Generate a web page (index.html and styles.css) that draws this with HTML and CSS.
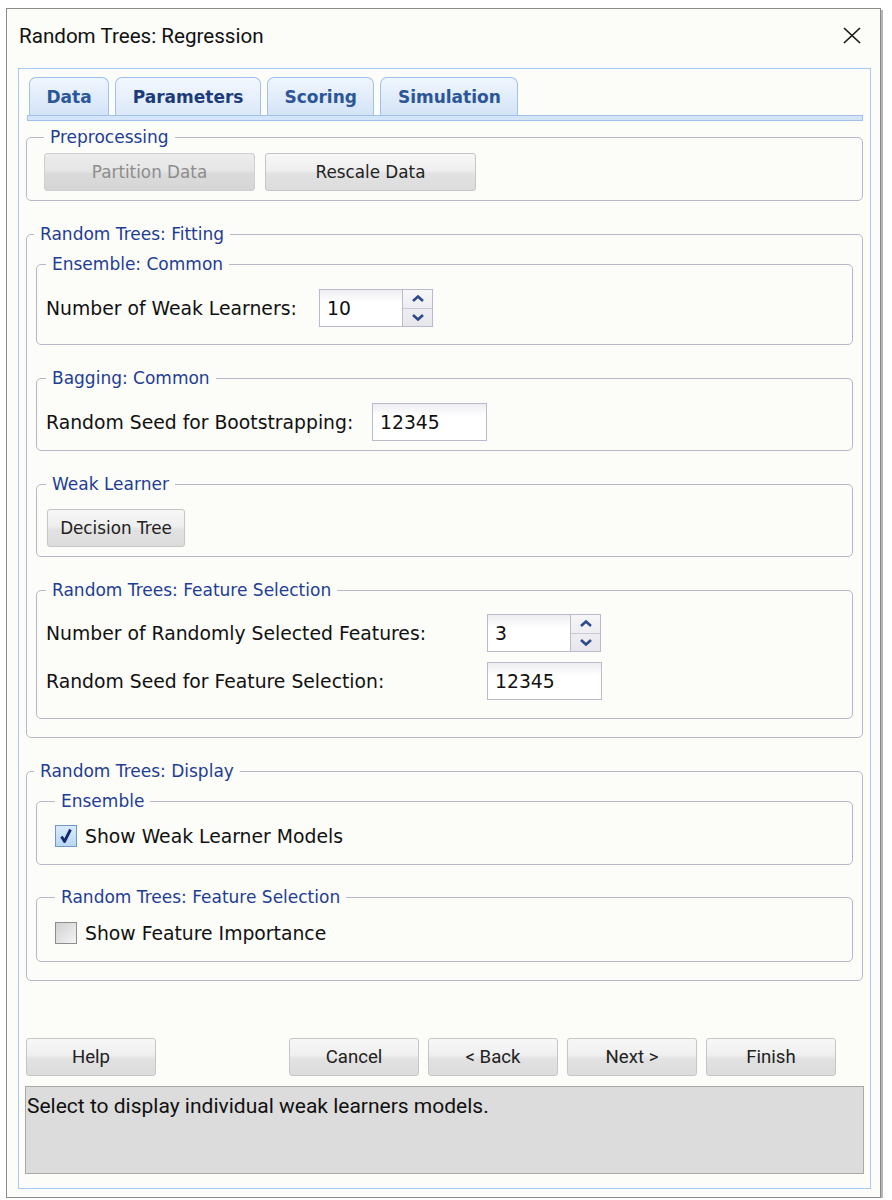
FILE: index.html
```html
<!DOCTYPE html>
<html>
<head>
<meta charset="utf-8">
<link rel="stylesheet" href="styles.css">
</head>
<body>
<div class="window">
  <div class="titlebar">
    <span class="title">Random Trees: Regression</span>
    <svg class="close" width="18" height="17" viewBox="0 0 18 17"><path d="M1 1 L17 16 M17 1 L1 16" stroke="#1a1a1a" stroke-width="1.7" fill="none"/></svg>
  </div>
  <div class="panel">
    <div class="tabs">
      <div class="tab">Data</div>
      <div class="tab active">Parameters</div>
      <div class="tab">Scoring</div>
      <div class="tab">Simulation</div>
    </div>
    <div class="tabbar"></div>

    <fieldset class="grp pre">
      <legend>Preprocessing</legend>
      <div class="btnrow">
        <div class="btn wide disabled">Partition Data</div>
        <div class="btn wide">Rescale Data</div>
      </div>
    </fieldset>

    <fieldset class="grp outer fit">
      <legend>Random Trees: Fitting</legend>
      <fieldset class="grp inner ens">
        <legend>Ensemble: Common</legend>
        <div class="row">
          <span class="lbl lbl-ens">Number of Weak Learners:</span>
          <div class="spin">
            <div class="field">10</div>
            <div class="arrows">
              <div class="arr"><svg width="14" height="9" viewBox="0 0 14 9"><path d="M2 7 L7 2.5 L12 7" stroke="#2d4b8c" stroke-width="2.6" fill="none"/></svg></div>
              <div class="arr"><svg width="14" height="9" viewBox="0 0 14 9"><path d="M2 2 L7 6.5 L12 2" stroke="#2d4b8c" stroke-width="2.6" fill="none"/></svg></div>
            </div>
          </div>
        </div>
      </fieldset>
      <fieldset class="grp inner bag">
        <legend>Bagging: Common</legend>
        <div class="row">
          <span class="lbl lbl-bag">Random Seed for Bootstrapping:</span>
          <div class="field solo">12345</div>
        </div>
      </fieldset>
      <fieldset class="grp inner weak">
        <legend>Weak Learner</legend>
        <div class="btnrow">
          <div class="btn dt">Decision Tree</div>
        </div>
      </fieldset>
      <fieldset class="grp inner fs">
        <legend>Random Trees: Feature Selection</legend>
        <div class="row">
          <span class="lbl lbl-fs">Number of Randomly Selected Features:</span>
          <div class="spin">
            <div class="field">3</div>
            <div class="arrows">
              <div class="arr"><svg width="14" height="9" viewBox="0 0 14 9"><path d="M2 7 L7 2.5 L12 7" stroke="#2d4b8c" stroke-width="2.6" fill="none"/></svg></div>
              <div class="arr"><svg width="14" height="9" viewBox="0 0 14 9"><path d="M2 2 L7 6.5 L12 2" stroke="#2d4b8c" stroke-width="2.6" fill="none"/></svg></div>
            </div>
          </div>
        </div>
        <div class="row row-gap">
          <span class="lbl lbl-fs">Random Seed for Feature Selection:</span>
          <div class="field solo">12345</div>
        </div>
      </fieldset>
    </fieldset>

    <fieldset class="grp outer disp">
      <legend>Random Trees: Display</legend>
      <fieldset class="grp inner2 ens2">
        <legend>Ensemble</legend>
        <div class="chkrow">
          <span class="chk checked"><svg width="22" height="22" viewBox="0 0 22 22"><path d="M6.5 11.5 L9.5 16.5 L15.5 4.5" stroke="#152a70" stroke-width="2.8" fill="none" stroke-linejoin="round"/></svg></span>
          <span class="chklbl">Show Weak Learner Models</span>
        </div>
      </fieldset>
      <fieldset class="grp inner2 fs2">
        <legend>Random Trees: Feature Selection</legend>
        <div class="chkrow">
          <span class="chk"></span>
          <span class="chklbl">Show Feature Importance</span>
        </div>
      </fieldset>
    </fieldset>

    <div class="nav">
      <div class="btn navbtn">Help</div>
      <div class="navgroup">
        <div class="btn navbtn">Cancel</div>
        <div class="btn navbtn">&lt; Back</div>
        <div class="btn navbtn">Next &gt;</div>
        <div class="btn navbtn">Finish</div>
      </div>
    </div>
    <div class="status">Select to display individual weak learners models.</div>
  </div>
</div>
</body>
</html>
```

FILE: styles.css
```css
html, body {
  margin: 0;
  padding: 0;
  background: #ffffff;
}
body {
  padding: 8px 0 0 6px;
  font-family: "DejaVu Sans", Verdana, sans-serif;
  color: #111;
}
.window {
  box-sizing: border-box;
  width: 875px;
  height: 1190px;
  border: 1px solid #8a8a8a;
  background: #fcfcf8;
  box-shadow: 2px 2px 0 #b5b5b5;
  display: flex;
  flex-direction: column;
}
.titlebar {
  box-sizing: border-box;
  height: 59px;
  flex: none;
  display: flex;
  align-items: center;
  justify-content: space-between;
  padding: 0 19px 6px 12px;
}
.title {
  font-family: Roboto, "Liberation Sans", sans-serif;
  font-size: 20.6px;
  color: #111;
}
.close { display: block; }
.panel {
  box-sizing: border-box;
  height: 1121px;
  margin: 0 9px 0 11px;
  border: 1px solid #a7c9f2;
  padding: 8px 7px 14px 7px;
  display: flex;
  flex-direction: column;
}
.tabs {
  display: flex;
  gap: 6px;
  margin-left: 3px;
  height: 38px;
}
.tab {
  box-sizing: border-box;
  height: 38px;
  padding: 1px 16.5px 0 16.5px;
  border: 1px solid #9fc2ec;
  border-bottom: none;
  border-radius: 7px 7px 0 0;
  background: linear-gradient(#f0f6fd, #d3e3f7);
  font-weight: bold;
  font-size: 17px;
  color: #2b5697;
  display: flex;
  align-items: center;
  justify-content: center;
}
.tab.active {
  color: #1c3b7a;
  background: linear-gradient(#f4f8fe, #dbe8f9);
}
.tabbar {
  box-sizing: border-box;
  height: 6px;
  margin-left: 1px;
  border: 1px solid #9fc2ec;
  background: #d4e5f9;
}
.grp {
  margin: 0;
  border: 1px solid #b7b7cb;
  border-radius: 5px;
  min-width: 0;
}
.grp > legend {
  padding: 0 6px;
  font-size: 17px;
  line-height: 18px;
  color: #1f3d94;
}
.pre { margin-top: 7px; padding: 7px 17px 9px 17px; }
.outer > legend { margin-left: -2px; }
.fit { margin-top: 24px; padding: 12px 9px 18px 9px; }
.inner { padding: 16px 9px 9px 9px; }
.ens { padding-bottom: 17px; }
.bag, .weak, .fs { margin-top: 24px; }
.fs { padding-top: 15px; padding-bottom: 18px; }
.disp { margin-top: 24px; padding: 12px 9px 18px 9px; }
.inner2 { padding: 14px 18px 16px 18px; }
.fs2 { margin-top: 23px; padding-top: 15px; }

.btnrow { display: flex; gap: 10px; }
.btn {
  box-sizing: border-box;
  height: 38px;
  border: 1px solid #c6c6c6;
  border-radius: 3px;
  background: linear-gradient(#f7f7f7 0%, #efefef 45%, #e2e2e2 55%, #dcdcdc 100%);
  display: flex;
  align-items: center;
  justify-content: center;
  font-size: 16.8px;
  color: #222;
}
.btn.wide { width: 211px; }
.btn.disabled {
  color: #8d8d8d;
  background: linear-gradient(#ececec 0%, #e6e6e6 45%, #dadada 55%, #d6d6d6 100%);
  border-color: #cfcfcf;
}
.btn.dt { width: 138px; margin-left: 1px; }

.row {
  display: flex;
  align-items: center;
  height: 38px;
}
.row-gap { margin-top: 10px; }
.lbl { font-size: 18.8px; flex: none; }
.lbl-ens { width: 273px; }
.lbl-bag { width: 326px; }
.lbl-fs { width: 441px; }

.field {
  box-sizing: border-box;
  height: 38px;
  width: 84px;
  border: 1px solid #babacd;
  background: linear-gradient(#eeeef2 0%, #ffffff 35%);
  font-size: 18.8px;
  display: flex;
  align-items: center;
  padding-left: 7px;
}
.field.solo { width: 115px; }
.spin { display: flex; }
.arrows {
  box-sizing: border-box;
  width: 30px;
  height: 38px;
  border: 1px solid #babacd;
  border-left: none;
  background: linear-gradient(#f6f6f8, #e6e6ec);
  display: flex;
  flex-direction: column;
}
.arr {
  flex: 1;
  display: flex;
  align-items: center;
  justify-content: center;
}
.arr + .arr { border-top: 1px solid #c8c8d6; }
.arr svg { display: block; }

.chkrow {
  display: flex;
  align-items: center;
  height: 24px;
}
.chk {
  box-sizing: border-box;
  width: 22px;
  height: 22px;
  border: 1px solid #8e8e8e;
  background: linear-gradient(135deg, #d0d0d0, #f4f4f4);
  flex: none;
  margin-right: 8px;
  position: relative;
}
.chk.checked {
  border-color: #6f97c8;
  background: linear-gradient(#d8ebfc, #b8d7f4);
}
.chk svg { position: absolute; left: -1px; top: -1px; }
.chklbl { font-size: 18.8px; }

.nav {
  margin-top: auto;
  display: flex;
  justify-content: space-between;
  margin-right: 27px;
}
.navgroup { display: flex; gap: 9px; }
.navbtn {
  width: 130px;
  font-family: Roboto, "Liberation Sans", sans-serif;
  font-size: 18.6px;
  color: #222;
}
.status {
  box-sizing: border-box;
  height: 88px;
  margin: 10px -1px 0 -1px;
  border: 1px solid #a9a9a9;
  background: #dcdcdc;
  padding: 7px 0 0 1px;
  font-family: Roboto, "Liberation Sans", sans-serif;
  font-size: 21px;
  color: #111;
}
```
